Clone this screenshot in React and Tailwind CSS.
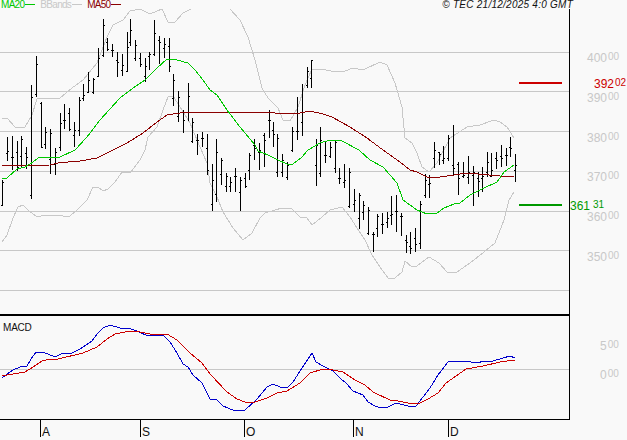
import React from "react";

// x, high, low, open (left tick), close (right tick)
const bars = [
  [2,180,206,205,182],[7,137,161,153,151],[12,136,170,157,157],[17,141,171,152,167],[21,136,167,156,139],[26,147,169,153,157],
  [31,85,199,195,97],[36,56,97,94,64],[41,102,148,103,147],[45,127,149,144,132],[50,129,174,159,133],[55,148,175,164,152],
  [60,113,151,147,123],[64,104,129,120,120],[69,108,131,113,129],[74,122,147,135,130],[79,97,136,130,100],[83,84,101,98,95],
  [88,72,93,92,80],[93,78,94,92,79],[98,48,77,76,58],[103,19,57,55,25],[107,38,51,42,49],[112,44,57,50,50],[117,52,77,60,62],
  [122,54,76,70,65],[127,32,72,71,47],[130,19,46,42,30],[135,40,61,58,45],[140,53,67,58,64],[145,58,82,76,66],[149,52,70,56,54],
  [154,20,56,54,33],[159,36,64,40,42],[164,38,58,48,44],[169,38,72,46,66],[173,74,106,98,80],[178,91,122,116,97],[183,110,133,112,120],
  [188,83,121,112,96],[192,118,143,141,122],[197,134,155,140,140],[202,132,147,138,138],[207,134,175,148,170],[212,164,211,204,180],
  [216,139,202,194,152],[221,158,185,174,160],[226,173,192,186,176],[230,177,192,186,182],[235,168,192,176,176],[240,177,211,192,180],
  [245,173,188,178,186],[249,153,180,170,155],[254,139,160,145,148],[259,143,170,152,150],[264,133,167,135,140],[269,110,138,120,120],
  [273,122,147,130,134],[277,134,177,172,138],[282,154,177,172,160],[287,162,180,177,165],[292,127,152,150,131],[297,97,140,131,131],
  [302,84,136,122,112],[307,67,88,85,71],[311,60,88,78,60],[316,139,186,165,145],[320,127,177,173,140],[325,142,163,155,155],
  [330,142,158,156,147],[335,140,173,168,142],[339,168,184,178,178],[344,164,188,182,180],[349,168,208,206,172],[354,189,212,204,200],
  [359,193,229,218,195],[363,201,220,212,205],[368,207,235,233,210],[373,232,252,234,234],[377,214,237,228,216],[382,213,234,224,224],
  [387,212,228,222,218],[391,196,225,215,214],[396,195,232,211,211],[401,213,236,216,216],[406,235,253,240,242],[410,232,254,246,248],
  [415,228,252,238,244],[420,201,249,243,204],[425,174,198,195,180],[429,175,198,184,183],[434,142,168,158,150],[439,152,165,152,154],
  [443,146,164,160,158],[448,135,161,158,138],[453,125,175,165,168],[458,162,195,164,178],[463,162,178,176,175],[468,156,184,177,172],
  [473,166,206,175,172],[478,172,197,178,181],[482,167,192,178,176],[487,152,177,172,162],[491,153,177,176,170],[496,152,169,158,160],
  [501,145,167,156,158],[506,148,166,155,155],[510,137,157,147,148],[515,154,182,170,165],
];

const upperA = "2,119 7,118 15,127 25,127 32,115 37,99 45,98 60,98 72,88 83,80 97,63 107,37 113,25 123,20 130,11 140,9 150,14 162,9 168,22 175,22 183,13 191,9";
const upperB = "230,9 240,20 248,37 255,60 262,88 268,98 278,108 283,120 290,121 298,107 305,85 312,69 322,69 335,72 345,71 353,68 363,70 380,62 387,65 395,83 402,107 405,138 412,143 417,153 422,167 429,172 437,163 450,138 467,127 480,125 494,120 500,122 507,127 514,138";
const lower = "2,242 7,235 13,218 18,207 23,205 28,210 37,217 45,215 63,216 70,216 77,210 87,200 93,187 98,187 103,191 108,189 115,182 122,172 130,173 140,160 145,150 148,137 157,127 163,110 168,97 173,96 182,110 190,123 200,147 207,163 210,183 217,197 223,212 233,228 243,240 252,233 260,218 265,213 282,208 292,209 300,217 307,218 312,225 322,217 330,210 342,207 350,217 357,228 365,240 372,255 380,267 388,278 395,278 402,272 405,261 412,267 417,266 429,257 439,263 447,272 457,272 470,263 484,252 495,243 504,220 509,200 514,192";
const ma20 = "2,179 7,178 17,169 25,167 33,162 38,158 43,157 60,157 75,150 87,137 100,120 120,98 133,88 145,80 157,68 167,59 177,60 188,63 195,70 203,80 210,90 217,95 227,110 240,127 255,145 258,151 268,155 278,160 287,164 293,164 302,157 308,150 320,143 330,140 342,141 359,150 370,160 383,167 397,183 403,200 410,205 417,210 427,214 437,213 444,208 454,204 460,203 470,195 484,188 497,182 504,172 514,165";
const ma50 = "2,166 7,165 10,166 50,165 58,163 68,162 80,161 97,158 113,150 127,143 143,133 157,122 167,115 180,113 190,112 210,113 218,112 268,112 275,113 287,114 300,113 310,111 323,114 332,117 350,127 367,138 383,150 400,162 410,170 417,172 427,177 440,177 447,176 467,173 500,176 514,177";

const macdBlue = "2,378 7,374 13,370 20,367 27,366 31,359 36,352 43,352 55,357 63,353 72,353 80,349 92,341 98,333 103,328 110,325 120,328 128,328 137,331 148,336 163,335 170,342 177,353 183,364 188,367 193,375 202,383 210,399 217,400 223,406 235,411 245,410 257,399 267,387 273,384 280,387 287,388 293,382 302,368 312,353 316,362 323,366 333,371 341,379 346,383 353,391 363,395 368,402 375,406 381,408 388,407 396,403 408,406 416,406 430,388 438,375 448,362 456,361 466,361 476,363 485,361 493,361 503,358 510,356 515,358";
const macdRed = "2,376 13,374 25,372 33,367 42,361 50,359 58,359 83,353 97,347 107,339 115,334 130,331 140,332 150,334 167,334 177,340 190,353 202,363 210,374 227,392 237,399 245,402 255,402 267,398 277,393 287,391 300,383 310,373 323,369 333,370 343,372 355,380 365,385 373,392 390,400 398,401 408,403 418,404 428,399 438,393 446,383 456,376 466,369 483,366 500,362 515,360";

const grid = [52, 91, 131, 171, 211, 250, 290];
const priceLabels = ["400", "390", "380", "370", "360", "350"];
const months = [
  { label: "A", width: "w-[100px]" },
  { label: "S", width: "w-[104px]" },
  { label: "O", width: "w-[109px]" },
  { label: "N", width: "w-[95px]" },
  { label: "D", width: "w-[60px]" },
];

const PriceChart = () => (
  <svg width="569" height="305" viewBox="0 9 569 305" shapeRendering="crispEdges" fill="none" className="block">
    {grid.map((y) => (
      <line key={y} x1="0" x2="569" y1={y + 0.5} y2={y + 0.5} stroke="#c8c8c8" />
    ))}
    <polyline points={upperA} stroke="#c8c8c8" />
    <polyline points={upperB} stroke="#c8c8c8" />
    <polyline points={lower} stroke="#c8c8c8" />
    {bars.map(([x, hi, lo, o, c]) => (
      <g key={x} stroke="#000">
        <line x1={x + 0.5} x2={x + 0.5} y1={hi} y2={lo} />
        <line x1={x - 1} x2={x} y1={o + 0.5} y2={o + 0.5} />
        <line x1={x + 1} x2={x + 2} y1={c + 0.5} y2={c + 0.5} />
      </g>
    ))}
    <polyline points={ma50} stroke="#8b0000" />
    <polyline points={ma20} stroke="#00c800" />
    <rect x="519" y="82" width="43" height="2" fill="#cc0000" />
    <rect x="519" y="204" width="43" height="2" fill="#009900" />
  </svg>
);

const MacdChart = () => (
  <svg width="569" height="103" viewBox="0 316 569 103" shapeRendering="crispEdges" fill="none" className="block">
    <line x1="0" x2="569" y1="369.5" y2="369.5" stroke="#c8c8c8" />
    <polyline points={macdBlue} stroke="#0000cc" />
    <polyline points={macdRed} stroke="#cc0000" />
  </svg>
);

const Price = ({ big, small, className }) => (
  <div className={`flex items-start font-['Liberation_Sans',sans-serif] ${className}`}>
    <span className="text-[12px] leading-[14px]">{big}</span>
    <span className="text-[10px] leading-[11px] ml-px">{small}</span>
  </div>
);

const Legend = ({ label, text, line }) => (
  <div className="flex items-center">
    <span className={`text-[10px] leading-[9px] ${text}`}>{label}</span>
    <span className={`w-[10px] h-px ml-px ${line}`} />
  </div>
);

export default function App() {
  return (
    <div className="w-[627px] h-[440px] overflow-hidden bg-[#f9f9f9] font-['Liberation_Sans',sans-serif]">
      {/* legend and copyright */}
      <div className="h-[9px] flex items-start pl-[1px] pr-[54px]">
        <div className="flex gap-[5px] tracking-[-0.7px]">
          <Legend label="MA20" text="text-[#00c800]" line="bg-[#00c800]" />
          <Legend label="BBands" text="text-[#c8c8c8]" line="bg-[#c8c8c8]" />
          <Legend label="MA50" text="text-[#8b0000]" line="bg-[#8b0000]" />
        </div>
        <div className="ml-auto text-[10px] leading-[9px] italic text-[#111] tracking-[0.25px] whitespace-nowrap">© TEC 21/12/2025 4:0 GMT</div>
      </div>

      {/* price panel */}
      <div className="flex h-[305px]">
        <div className="border-r border-black">
          <PriceChart />
        </div>
        <div className="relative flex-1 flex flex-col items-start pt-[42px] pl-[17px] text-[#c8c8c8]">
          {priceLabels.map((p) => (
            <Price key={p} big={p} small="00" className="h-[39.8px]" />
          ))}
          <Price big="392" small="02" className="absolute top-[68px] left-[24px] text-[#cc0000]" />
          <Price big="361" small="31" className="absolute top-[190px] left-0 gap-[2px] text-[#009900]" />
        </div>
      </div>

      {/* macd panel */}
      <div className="h-[2px] w-[570px] bg-black" />
      <div className="flex h-[103px]">
        <div className="relative border-r border-black">
          <MacdChart />
          <span className="absolute left-[3px] top-[7px] text-[10px] leading-[10px] tracking-[-0.2px] text-[#111]">MACD</span>
        </div>
        <div className="flex-1 flex flex-col items-start pt-[23px] pl-[30px] text-[#c8c8c8]">
          <Price big="5" small="00" className="h-[29px]" />
          <Price big="0" small="00" />
        </div>
      </div>
      <div className="h-px w-[570px] bg-black" />

      {/* month axis */}
      <div className="flex pl-[40px]">
        {months.map((m) => (
          <div key={m.label} className={`${m.width} h-[17px] border-l border-black flex items-end pl-[1px] text-[12px] leading-[10px] text-[#111]`}>
            {m.label}
          </div>
        ))}
      </div>
    </div>
  );
}
